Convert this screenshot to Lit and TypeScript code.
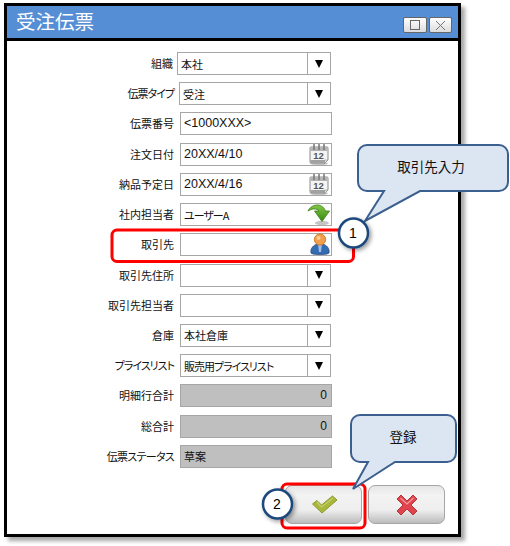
import {LitElement, css, html, svg} from 'lit';
import {customElement} from 'lit/decorators.js';

type Kind = 'select' | 'text' | 'date' | 'next' | 'user' | 'readonly' | 'number';

interface Row {
  label: string;
  kind: Kind;
  value?: string;
  latin?: boolean;
  cls?: string;
  labelCls?: string;
  tightValue?: boolean;
}

const ROWS: Row[] = [
  {label: '組織', kind: 'select', value: '本社', cls: 'first'},
  {label: '伝票タイプ', kind: 'select', value: '受注', cls: 'second', labelCls: 'tight'},
  {label: '伝票番号', kind: 'text', value: '<1000XXX>', latin: true},
  {label: '注文日付', kind: 'date', value: '20XX/4/10', latin: true},
  {label: '納品予定日', kind: 'date', value: '20XX/4/16', latin: true},
  {label: '社内担当者', kind: 'next', value: 'ユーザーA', tightValue: true},
  {label: '取引先', kind: 'user'},
  {label: '取引先住所', kind: 'select'},
  {label: '取引先担当者', kind: 'select'},
  {label: '倉庫', kind: 'select', value: '本社倉庫'},
  {label: 'プライスリスト', kind: 'select', value: '販売用プライスリスト', labelCls: 'tight', tightValue: true},
  {label: '明細行合計', kind: 'number', value: '0', latin: true},
  {label: '総合計', kind: 'number', value: '0', latin: true},
  {label: '伝票ステータス', kind: 'readonly', value: '草案', labelCls: 'tight-s'},
];

const calendarIcon = html`
  <svg class="icon" width="22" height="23" viewBox="0 0 22 23">
    <ellipse cx="11" cy="20.500" rx="9" ry="1.600" fill="#c4c4c4" />
    <path d="M3 4h16a1 1 0 0 1 1 1v12l-3 3H3a1 1 0 0 1-1-1V5a1 1 0 0 1 1-1z" fill="#f4f4f4" stroke="#8c8c8c" />
    <path d="M2.500 4.500h17v3.500h-17z" fill="#b4b4b4" />
    <path d="M2.500 17h14.500v3h-14.500z" fill="#a2a2a2" />
    <path d="M16.500 20.500v-3.500h3.500z" fill="#e4e4e4" stroke="#8c8c8c" stroke-width=".6" />
    <path d="M6 1.500v5M11 1.500v5M16 1.500v5" stroke="#7a7a7a" stroke-width="1.600" stroke-linecap="round" />
    <text x="10.500" y="15.800" text-anchor="middle" class="cal">12</text>
  </svg>
`;

const nextIcon = html`
  <svg class="icon" width="23" height="23" viewBox="0 0 23 23">
    <defs>
      <linearGradient id="arrow-green" x1="0" y1="0" x2="0" y2="1">
        <stop offset="0" stop-color="#84c648" />
        <stop offset="1" stop-color="#358a0e" />
      </linearGradient>
    </defs>
    <ellipse cx="15" cy="20" rx="7" ry="2.200" fill="#c4c4c4" />
    <path
      d="M1 8C4 1 15 -1 18.500 8L22.500 8L15 18.500L7.500 8L12 8C9.500 5 5 5.500 1 8Z"
      fill="url(#arrow-green)"
      stroke="#3f7d1c"
      stroke-width=".8"
    />
  </svg>
`;

const userIcon = html`
  <svg class="icon" width="20" height="23" viewBox="0 0 20 23">
    <path d="M1 20c-1-5 3-8 6-9h6c3 1 7 4 6 9-1 2-17 2-18 0z" fill="#356bb0" stroke="#274f88" stroke-width=".8" />
    <path d="M8 11h4l-1 8H9z" fill="#9cc0ea" />
    <circle cx="10" cy="6.500" r="5.600" fill="#f0a04a" stroke="#d07a22" />
    <circle cx="8.500" cy="5" r="2" fill="#f9cc94" />
  </svg>
`;

@customElement('app-root')
export class AppRoot extends LitElement {
  static styles = css`
    :host {
      display: block;
      position: relative;
      width: 510px;
      height: 546px;
      overflow: hidden;
      background: #fff;
      font-family: 'Noto Sans CJK JP', 'Liberation Sans', sans-serif;
      color: #111;
    }
    .window {
      box-sizing: border-box;
      margin: 3px 0 0 4px;
      width: 457px;
      height: 534px;
      border: 3px solid #000;
      background: #fff;
      box-shadow: 4px 4px 4px rgba(0, 0, 0, 0.35);
      display: flex;
      flex-direction: column;
    }
    .title {
      box-sizing: border-box;
      height: 35px;
      flex: none;
      background: #558ed5;
      border-bottom: 3px solid #000;
      display: flex;
      align-items: flex-start;
      justify-content: space-between;
      padding: 0 6px 0 9px;
      color: #fff;
      font-size: 19.500px;
      line-height: 30px;
    }
    .controls {
      display: flex;
      gap: 2px;
      margin-top: 11px;
    }
    .ctl {
      box-sizing: border-box;
      width: 24px;
      height: 16px;
      border: 1px solid #666;
      border-radius: 2px;
      background: linear-gradient(#fff, #dcdcdc);
      display: flex;
      align-items: center;
      justify-content: center;
    }
    .ctl.close {
      width: 23px;
    }
    .form {
      height: 416px;
      flex: none;
      margin-top: 11px;
      display: flex;
      flex-direction: column;
      justify-content: space-between;
    }
    .row {
      height: 23px;
      display: flex;
      align-items: stretch;
    }
    .label {
      width: 167px;
      flex: none;
      text-align: right;
      font-size: 11px;
      line-height: 23px;
      font-feature-settings: 'palt';
      white-space: nowrap;
    }
    .tight {
      letter-spacing: -1px;
    }
    .tight-s {
      letter-spacing: -0.7px;
    }
    .field {
      box-sizing: border-box;
      margin-left: 6px;
      width: 152px;
      flex: none;
      border: 1px solid #a6a6a6;
      background: #fff;
      display: flex;
      align-items: center;
      position: relative;
      font-size: 11px;
      line-height: 21px;
      padding-left: 3px;
      font-feature-settings: 'palt';
      white-space: nowrap;
    }
    .row.first .label {
      width: 166px;
    }
    .row.first .field {
      margin-left: 4px;
      width: 154px;
    }
    .row.second .field {
      margin-left: 5px;
      width: 152px;
    }
    .value {
      flex: 1;
      overflow: hidden;
      padding-top: 1px;
    }
    .value.latin {
      font-family: 'Liberation Sans', sans-serif;
      font-size: 12.500px;
      padding-top: 0;
    }
    .zero {
      font-family: 'Liberation Sans', sans-serif;
      font-size: 12px;
    }
    .field.select {
      width: 151px;
    }
    .arrow {
      width: 22px;
      align-self: stretch;
      flex: none;
      border-left: 1px solid #a6a6a6;
      display: flex;
      align-items: center;
      justify-content: center;
    }
    .arrow::before {
      content: '';
      border-left: 4.500px solid transparent;
      border-right: 4.500px solid transparent;
      border-top: 8px solid #000;
    }
    .field.readonly,
    .field.number {
      background: #bfbfbf;
    }
    .field.number {
      justify-content: flex-end;
      padding-right: 4px;
    }
    .icon {
      position: absolute;
      right: 1px;
      top: -1px;
    }
    .cal {
      font: bold 9.500px 'Liberation Sans', sans-serif;
      fill: #555;
    }
    .footer {
      margin-top: 17px;
      padding-right: 13px;
      display: flex;
      justify-content: flex-end;
      gap: 6px;
    }
    .btn {
      box-sizing: border-box;
      width: 77px;
      height: 39px;
      border: 1px solid #a6a6a6;
      border-radius: 7px;
      background: linear-gradient(#e6e6e6 0%, #f3f3f3 25%, #eeeeee 65%, #bcbcbc 100%);
      display: flex;
      align-items: center;
      justify-content: center;
    }
    .check {
      margin-left: 3px;
    }
    .overlay {
      position: absolute;
      left: 0;
      top: 0;
      pointer-events: none;
    }
    .callout-text {
      font-size: 13.500px;
      fill: #111;
      text-anchor: middle;
    }
    .badge-text {
      font: 14px 'Liberation Sans', sans-serif;
      fill: #000;
      text-anchor: middle;
    }
  `;

  private renderField(r: Row) {
    const cls = `value ${r.latin ? 'latin' : ''} ${r.tightValue ? 'tight' : ''}`;
    const text = html`<span class=${cls}>${r.value ?? ''}</span>`;
    switch (r.kind) {
      case 'select':
        return html`<div class="field select">${text}<span class="arrow"></span></div>`;
      case 'date':
        return html`<div class="field">${text}${calendarIcon}</div>`;
      case 'next':
        return html`<div class="field">${text}${nextIcon}</div>`;
      case 'user':
        return html`<div class="field">${text}${userIcon}</div>`;
      case 'readonly':
        return html`<div class="field readonly">${text}</div>`;
      case 'number':
        return html`<div class="field number"><span class="zero">${r.value}</span></div>`;
      default:
        return html`<div class="field">${text}</div>`;
    }
  }

  private renderOverlay() {
    return html`
      <svg class="overlay" width="510" height="546" viewBox="0 0 510 546">
        <defs>
          <filter id="sh" x="-30%" y="-30%" width="170%" height="170%">
            <feDropShadow dx="2" dy="2" stdDeviation="2" flood-color="#000" flood-opacity=".4" />
          </filter>
        </defs>
        ${svg`
          <rect x="112" y="230" width="241.500" height="31.500" rx="5" fill="none" stroke="#f00" stroke-width="3" />
          <rect x="282" y="484" width="83" height="44" rx="5" fill="none" stroke="#f00" stroke-width="3" />
          <path
            d="M367 145H499a9 9 0 0 1 9 9V182a9 9 0 0 1-9 9H420L365 221L384 191H367a9 9 0 0 1-9-9V154a9 9 0 0 1 9-9Z"
            fill="#dce6f2" stroke="#3b5f8e" stroke-width="2"
          />
          <path
            d="M360 415H447a9 9 0 0 1 9 9V453a9 9 0 0 1-9 9H395L353 489L368 462H360a9 9 0 0 1-9-9V424a9 9 0 0 1 9-9Z"
            fill="#dce6f2" stroke="#3b5f8e" stroke-width="2"
          />
          <text class="callout-text" x="431" y="172">取引先入力</text>
          <text class="callout-text" x="403" y="442">登録</text>
          <circle cx="353.500" cy="233" r="14.500" fill="#fff" stroke="#1f497d" stroke-width="2.500" filter="url(#sh)" />
          <circle cx="277.500" cy="504" r="14.500" fill="#fff" stroke="#1f497d" stroke-width="2.500" filter="url(#sh)" />
          <text class="badge-text" x="353" y="238">1</text>
          <text class="badge-text" x="277" y="509">2</text>
        `}
      </svg>
    `;
  }

  render() {
    return html`
      <div class="window">
        <div class="title">
          <span>受注伝票</span>
          <div class="controls">
            <div class="ctl">
              <svg width="11" height="11"><rect x=".5" y=".5" width="9" height="9" fill="none" stroke="#666" /></svg>
            </div>
            <div class="ctl close">
              <svg width="11" height="11"><path d="M1 1l9 9M10 1l-9 9" stroke="#777" fill="none" /></svg>
            </div>
          </div>
        </div>
        <div class="form">
          ${ROWS.map(
            (r) => html`
              <div class="row ${r.cls ?? ''}">
                <div class="label ${r.labelCls ?? ''}">${r.label}</div>
                ${this.renderField(r)}
              </div>
            `
          )}
        </div>
        <div class="footer">
          <div class="btn">
            <svg class="check" width="28" height="20" viewBox="0 0 28 20">
              <path d="M1.500 9L6 5.500L10.500 10L21.500 1L26 5L11 18Z" fill="#a9b83c" stroke="#8c9a2e" />
              <path d="M6 7L10.500 12L22 3" fill="none" stroke="#c4cf6e" stroke-width="1.200" />
            </svg>
          </div>
          <div class="btn">
            <svg width="22" height="22" viewBox="0 0 22 22">
              <path d="M1 5L5 1L11 7L17 1L21 5L15 11L21 17L17 21L11 15L5 21L1 17L7 11Z" fill="#e0444c" stroke="#b5333a" />
              <path d="M4.500 4L11 10L17.500 4" fill="none" stroke="#f2989c" stroke-width="1.200" />
            </svg>
          </div>
        </div>
      </div>
      ${this.renderOverlay()}
    `;
  }
}
